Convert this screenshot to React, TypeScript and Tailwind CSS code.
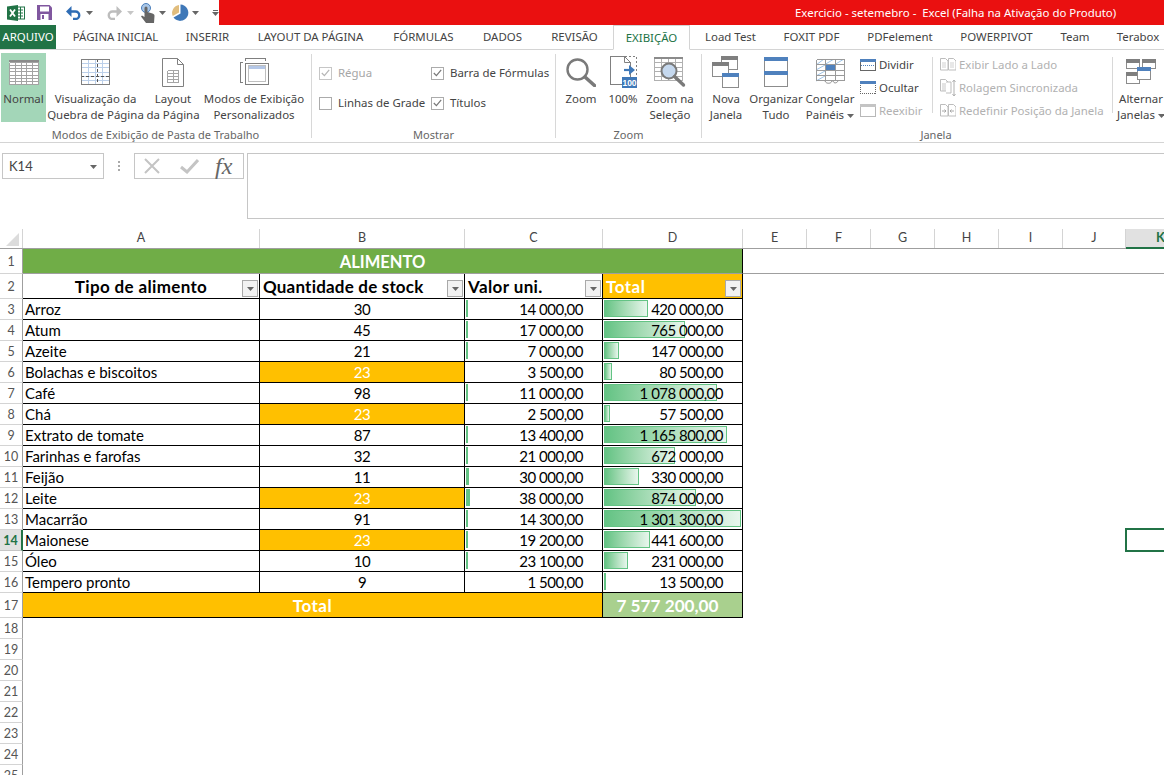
import type { ReactNode } from "react";

const tabs = [
  { name: "PÁGINA INICIAL", w: "w-[113px]" },
  { name: "INSERIR", w: "w-[71px]" },
  { name: "LAYOUT DA PÁGINA", w: "w-[135px]" },
  { name: "FÓRMULAS", w: "w-[91px]" },
  { name: "DADOS", w: "w-[67px]" },
  { name: "REVISÃO", w: "w-[77px]" },
  { name: "EXIBIÇÃO", w: "w-[77px]", active: true },
  { name: "Load Test", w: "w-[81px]" },
  { name: "FOXIT PDF", w: "w-[81px]" },
  { name: "PDFelement", w: "w-[96px]" },
  { name: "POWERPIVOT", w: "w-[97px]" },
  { name: "Team", w: "w-[60px]" },
  { name: "Terabox", w: "w-[66px]" },
];

const rows = [
  { name: "Arroz", qty: 30, unit: 14000, total: 420000 },
  { name: "Atum", qty: 45, unit: 17000, total: 765000 },
  { name: "Azeite", qty: 21, unit: 7000, total: 147000 },
  { name: "Bolachas e biscoitos", qty: 23, unit: 3500, total: 80500 },
  { name: "Café", qty: 98, unit: 11000, total: 1078000 },
  { name: "Chá", qty: 23, unit: 2500, total: 57500 },
  { name: "Extrato de tomate", qty: 87, unit: 13400, total: 1165800 },
  { name: "Farinhas e farofas", qty: 32, unit: 21000, total: 672000 },
  { name: "Feijão", qty: 11, unit: 30000, total: 330000 },
  { name: "Leite", qty: 23, unit: 38000, total: 874000 },
  { name: "Macarrão", qty: 91, unit: 14300, total: 1301300 },
  { name: "Maionese", qty: 23, unit: 19200, total: 441600 },
  { name: "Óleo", qty: 10, unit: 23100, total: 231000 },
  { name: "Tempero pronto", qty: 9, unit: 1500, total: 13500 },
];

const money = (n: number) => {
  const s = String(n).replace(/\B(?=(\d{3})+(?!\d))/g, " ");
  return `${s},00`;
};

const Caret = ({ color = "#666" }: { color?: string }) => (
  <svg width="7" height="4" viewBox="0 0 7 4" className="inline-block">
    <path d="M0 0h7L3.5 4z" fill={color} />
  </svg>
);

const Grid = ({ x, y, w, h, cols, rowsN, color }: { x: number; y: number; w: number; h: number; cols: number; rowsN: number; color: string }) => (
  <g stroke={color} shapeRendering="crispEdges" fill="none">
    {Array.from({ length: cols + 1 }).map((_, i) => (
      <line key={`c${i}`} x1={x + (w * i) / cols} x2={x + (w * i) / cols} y1={y} y2={y + h} />
    ))}
    {Array.from({ length: rowsN + 1 }).map((_, i) => (
      <line key={`r${i}`} y1={y + (h * i) / rowsN} y2={y + (h * i) / rowsN} x1={x} x2={x + w} />
    ))}
  </g>
);

const ExcelLogo = () => (
  <svg width="18" height="16" viewBox="0 0 18 16">
    <rect x="9" y="2" width="8.5" height="12" fill="#fff" stroke="#217346" />
    <path d="M11 5h5M11 8h5M11 11h5M13.5 2v12" stroke="#217346" />
    <path d="M0 1.5 11 0v16L0 14.5z" fill="#217346" />
    <path d="M3 4.5 8 11.5M8 4.5 3 11.5" stroke="#fff" strokeWidth="1.8" />
  </svg>
);

const SaveIcon = () => (
  <svg width="15" height="15" viewBox="0 0 15 15">
    <path d="M0 0h12.5L15 2.5V15H0z" fill="#80579f" />
    <rect x="3" y="1.5" width="9" height="5" fill="#fff" />
    <rect x="3.5" y="9" width="8" height="6" fill="#fff" />
    <rect x="5" y="10" width="2" height="4" fill="#80579f" />
  </svg>
);

const UndoIcon = ({ color, flip }: { color: string; flip?: boolean }) => (
  <svg width="15" height="14" viewBox="0 0 15 14" className={flip ? "-scale-x-100" : ""}>
    <path d="M3 5.5h6.5a3.7 3.7 0 0 1 0 7.5H7" fill="none" stroke={color} strokeWidth="2.4" />
    <path d="M5.5 0v11L0 5.5z" fill={color} />
  </svg>
);

const TouchIcon = () => (
  <svg width="14" height="20" viewBox="0 0 14 20">
    <circle cx="5" cy="5" r="4.5" fill="#a9c6e6" stroke="#4a7ebb" />
    <path d="M3.5 5a1.5 1.5 0 0 1 3 0v4l5 1.5c1.5.5 2 1 2 2.5L13 20H5L0 13.5l1-1 2.5 1.5z" fill="#666" />
  </svg>
);

const PieIcon = () => (
  <svg width="17" height="17" viewBox="0 0 17 17">
    <path d="M8.5 .5A8.2 8.2 0 1 1 1.5 13.5L8.5 9.5z" fill="#3f78b8" />
    <path d="M7 8.5V1A8 8 0 0 0 .7 12z" fill="#e1bd7d" />
  </svg>
);

const NormalIcon = () => (
  <svg width="30" height="25" viewBox="0 0 30 25">
    <rect x="0.5" y="0.5" width="29" height="24" fill="#fff" />
    <Grid x={0.5} y={2.5} w={29} h={22} cols={5} rowsN={7} color="#a3a3a3" />
    <rect x="0" y="0" width="30" height="2" fill="#8b8b8b" />
  </svg>
);

const BreakIcon = () => (
  <svg width="29" height="26" viewBox="0 0 29 26">
    <rect x="0.5" y="0.5" width="28" height="25" fill="#fff" stroke="#7f7f7f" />
    <Grid x={0.5} y={0.5} w={28} h={25} cols={4} rowsN={6} color="#bcd0ea" />
    <path d="M16.5 0v26M0 17.5h29" stroke="#555" strokeDasharray="3 2" shapeRendering="crispEdges" />
    <rect x="0.5" y="0.5" width="28" height="25" fill="none" stroke="#7f7f7f" shapeRendering="crispEdges" />
  </svg>
);

const LayoutIcon = () => (
  <svg width="22" height="29" viewBox="0 0 22 29">
    <path d="M.5.5h15l6 6v22H.5z" fill="#fff" stroke="#808080" />
    <path d="M15.5.5v6h6" fill="none" stroke="#808080" />
    <Grid x={5.5} y={12.5} w={11} h={12} cols={2} rowsN={4} color="#a5a5a5" />
  </svg>
);

const CustomIcon = () => (
  <svg width="29" height="28" viewBox="0 0 29 28" shapeRendering="crispEdges">
    <path d="M5 .5h20M5 0v3M25 0v3M.5 4v20M0 4h3M0 24h3" stroke="#7f7f7f" fill="none" />
    <rect x="5.5" y="5.5" width="23" height="21" fill="#fff" stroke="#7f7f7f" />
    <rect x="8.5" y="7.5" width="17" height="16" fill="#fff" stroke="#bfbfbf" />
    <rect x="9" y="8" width="16" height="3" fill="#b4c7e7" />
  </svg>
);

const ZoomIcon = () => (
  <svg width="30" height="29" viewBox="0 0 30 29">
    <circle cx="11.5" cy="11.5" r="10" fill="#fff" stroke="#7a7a7a" strokeWidth="2.4" />
    <path d="M19 19l9.5 8.5" stroke="#7a7a7a" strokeWidth="3.6" strokeLinecap="round" />
  </svg>
);

const HundredIcon = () => (
  <svg width="27" height="32" viewBox="0 0 27 32">
    <path d="M.5.5h14l6 6v22H.5z" fill="#fff" stroke="#808080" shapeRendering="crispEdges" />
    <path d="M15 .5h11.5v20" fill="none" stroke="#808080" strokeDasharray="2 2" shapeRendering="crispEdges" />
    <path d="M14.5.5v6h6" fill="none" stroke="#808080" />
    <path d="M14 14h8" stroke="#3f78b8" strokeWidth="2.2" />
    <path d="M19 9l6 5-6 5z" fill="#3f78b8" />
    <rect x="12" y="21" width="15" height="11" fill="#3f78b8" />
    <text x="19.5" y="30" textAnchor="middle" fontSize="8.5" fontWeight="700" fill="#fff" fontFamily="Liberation Sans, sans-serif">100</text>
  </svg>
);

const SelectionIcon = () => (
  <svg width="32" height="31" viewBox="0 0 32 31">
    <Grid x={0.5} y={1.5} w={28} h={22} cols={4} rowsN={5} color="#b0b0b0" />
    <rect x="0" y="0" width="29" height="2" fill="#8b8b8b" />
    <circle cx="15" cy="14" r="7.5" fill="#c5d8ee" stroke="#7a7a7a" strokeWidth="2" />
    <path d="M20.5 19.5l9 8.5" stroke="#7a7a7a" strokeWidth="3.4" strokeLinecap="round" />
  </svg>
);

const Win = ({ x, y, w, h, bar }: { x: number; y: number; w: number; h: number; bar: string }) => (
  <g shapeRendering="crispEdges">
    <rect x={x + 0.5} y={y + 0.5} width={w - 1} height={h - 1} fill="#fff" stroke="#8c8c8c" />
    <rect x={x} y={y} width={w} height="4" fill={bar} />
  </g>
);

const NewWindowIcon = () => (
  <svg width="28" height="32" viewBox="0 0 28 32">
    <Win x={9} y={0} w={17} h={14} bar="#7f7f7f" />
    <Win x={0} y={6} w={17} h={15} bar="#7f7f7f" />
    <Win x={10} y={17} w={17} h={15} bar="#4f81bd" />
  </svg>
);

const ArrangeIcon = () => (
  <svg width="24" height="30" viewBox="0 0 24 30" shapeRendering="crispEdges">
    <rect x="0.5" y="0.5" width="23" height="29" fill="#fff" stroke="#8c8c8c" />
    <rect x="0" y="0" width="24" height="4" fill="#4f81bd" />
    <rect x="0" y="14" width="24" height="4" fill="#4f81bd" />
  </svg>
);

const FreezeIcon = () => (
  <svg width="29" height="26" viewBox="0 0 29 26">
    <rect x="0.5" y="0.5" width="28" height="21" fill="#fff" />
    <path d="M0 6 8 0M8 6 18 0M18 6 28 0M0 11l9-5M0 17l9-5M0 22l9-5" stroke="#9dc3e6" />
    <Grid x={0.5} y={0.5} w={28} h={21} cols={3} rowsN={4} color="#9a9a9a" />
    <rect x="10" y="6" width="9" height="5" fill="#4f81bd" />
    <path d="M9 22c1 3 6 3 7 0M17 22c1 3 4 2 5 0" fill="none" stroke="#8c8c8c" />
  </svg>
);

const SplitIcon = () => (
  <svg width="16" height="12" viewBox="0 0 16 12" shapeRendering="crispEdges">
    <rect x="0.5" y="0.5" width="15" height="11" fill="#fff" stroke="#666" />
    <rect x="0" y="0" width="16" height="3" fill="#4f81bd" />
    <path d="M1 6.5h14" stroke="#4f81bd" strokeDasharray="1 1" />
  </svg>
);

const HideIcon = () => (
  <svg width="16" height="13" viewBox="0 0 16 13" shapeRendering="crispEdges">
    <rect x="0.5" y="0.5" width="15" height="12" fill="#fff" stroke="#666" strokeDasharray="1 1" />
    <rect x="0" y="0" width="16" height="3" fill="#4f81bd" />
  </svg>
);

const UnhideIcon = () => (
  <svg width="16" height="13" viewBox="0 0 16 13" shapeRendering="crispEdges">
    <rect x="0.5" y="0.5" width="15" height="12" fill="#fff" stroke="#b8b8b8" />
    <rect x="0" y="0" width="16" height="3" fill="#c4c4c4" />
  </svg>
);

const Page = ({ x }: { x: number }) => (
  <path d={`M${x + 0.5} .5h5l2.5 2.5v9h-7.5z`} fill="#fff" stroke="#bdbdbd" />
);

const SideBySideIcon = () => (
  <svg width="16" height="13" viewBox="0 0 16 13">
    <Page x={0} />
    <Page x={8} />
    <path d="M2 5h4M2 7h4M2 9h4M10 5h4M10 7h4M10 9h4" stroke="#d0d0d0" />
  </svg>
);

const SyncIcon = () => (
  <svg width="16" height="18" viewBox="0 0 16 18">
    <Page x={0} />
    <g transform="translate(0 2)">
      <path d="M2 3h5M2 5h5M2 7h5M2 9h5" stroke="#c8c8c8" />
    </g>
    <path d="M6 3h5v11H6" fill="#fff" stroke="#bdbdbd" />
    <path d="M14 1v16M12.5 3 14 1l1.5 2M12.5 15l1.5 2 1.5-2" fill="none" stroke="#b0b0b0" />
  </svg>
);

const ResetIcon = () => (
  <svg width="16" height="13" viewBox="0 0 16 13">
    <Page x={0} />
    <Page x={8} />
    <path d="M2 7h4M4.5 5.5 6 7 4.5 8.5M14 7h-4M11.5 5.5 10 7l1.5 1.5" fill="none" stroke="#a8a8a8" />
  </svg>
);

const SwitchIcon = () => (
  <svg width="30" height="26" viewBox="0 0 30 26">
    <Win x={0} y={0} w={14} h={10} bar="#7f7f7f" />
    <Win x={16} y={0} w={14} h={10} bar="#7f7f7f" />
    <Win x={0} y={13} w={14} h={12} bar="#7f7f7f" />
    <Win x={11} y={8} w={14} h={13} bar="#4f81bd" />
  </svg>
);

const BigButton = ({ w, icon, lines, active, caret }: { w: string; icon: ReactNode; lines: string[]; active?: boolean; caret?: boolean }) => (
  <div className={`${w} h-[69px] flex flex-col items-center shrink-0 ${active ? "bg-[#a3d6b8]" : ""}`}>
    <div className="h-[38px] shrink-0 flex items-center justify-center">{icon}</div>
    <div className="text-center leading-[16px] whitespace-nowrap">
      {lines.map((l, i) => (
        <div key={l}>
          {l}
          {caret && i === lines.length - 1 && (
            <span className="ml-[3px] align-middle inline-flex">
              <Caret />
            </span>
          )}
        </div>
      ))}
    </div>
  </div>
);

const SmallRow = ({ icon, label, disabled }: { icon: ReactNode; label: string; disabled?: boolean }) => (
  <div className={`h-[23px] flex items-center whitespace-nowrap ${disabled ? "text-[#b1b1b1]" : ""}`}>
    <div className="w-[19px] shrink-0 flex">{icon}</div>
    {label}
  </div>
);

const CheckRow = ({ label, checked, disabled }: { label: string; checked?: boolean; disabled?: boolean }) => (
  <div className={`h-[20px] flex items-center gap-[6px] whitespace-nowrap ${disabled ? "text-[#a6a6a6]" : ""}`}>
    <div className={`w-[13px] h-[13px] border bg-white flex items-center justify-center ${disabled ? "border-[#c6c6c6]" : "border-[#ababab]"}`}>
      {checked && (
        <svg width="9" height="8" viewBox="0 0 9 8">
          <path d="M.8 4l2.6 2.6L8.2.8" fill="none" stroke={disabled ? "#b5b5b5" : "#777"} strokeWidth="1.2" />
        </svg>
      )}
    </div>
    {label}
  </div>
);

const Sep = () => <div className="w-px h-[84px] mt-[4px] bg-[#d8d8d8] shrink-0" />;

const Group = ({ w, label, children }: { w: string; label: string; children: ReactNode }) => (
  <div className={`${w} h-full flex flex-col shrink-0`}>
    <div className="flex-1 flex pt-[3px]">{children}</div>
    <div className="h-[17px] leading-[19px] text-center text-[11px] text-[#666] whitespace-nowrap">{label}</div>
  </div>
);

const FilterBtn = () => (
  <div className="absolute right-[1px] bottom-[1px] w-[16px] h-[17px] bg-[#f2f2f2] border border-[#a9a9a9] flex items-center justify-center">
    <Caret color="#666" />
  </div>
);

const RowHead = ({ n, h, selected }: { n: number; h: string; selected?: boolean }) => (
  <div
    className={`w-[23px] ${h} shrink-0 flex items-center justify-center pt-[2px] text-[12.5px] border-b ${
      selected
        ? "bg-[#e1e1e1] text-[#217346] font-bold border-b-[#c6c6c6] border-r-2 border-r-[#217346]"
        : "text-[#555] border-b-[#d4d4d4] border-r border-r-[#9f9f9f]"
    }`}
  >
    {n}
  </div>
);

const DataBar = ({ pct, solid }: { pct: number; solid?: boolean }) => (
  <div
    className={`absolute left-[1px] top-[1px] bottom-[2px] border border-[#63c384] ${solid ? "bg-[#63c384]" : "bg-gradient-to-r from-[#63c384] to-[#e8f6ed]"}`}
    style={{ width: pct }}
  />
);

export default function App() {
  const maxTotal = 1301300;
  return (
    <div className="w-[1164px] h-[775px] overflow-hidden bg-white text-[11.45px] text-[#444] font-['Noto_Sans',sans-serif]">
      {/* title bar */}
      <div className="h-[25px] flex">
        <div className="w-[219px] shrink-0 flex items-center">
          <div className="ml-[7px] flex"><ExcelLogo /></div>
          <div className="ml-[12px] flex"><SaveIcon /></div>
          <div className="ml-[14px] flex"><UndoIcon color="#2f6db5" /></div>
          <div className="ml-[5px] flex"><Caret /></div>
          <div className="ml-[14px] flex"><UndoIcon color="#bdbdbd" flip /></div>
          <div className="ml-[5px] flex"><Caret color="#c6c6c6" /></div>
          <div className="ml-[7px] flex"><TouchIcon /></div>
          <div className="ml-[4px] flex"><Caret /></div>
          <div className="ml-[6px] flex"><PieIcon /></div>
          <div className="ml-[3px] flex"><Caret /></div>
          <div className="ml-[13px] flex flex-col gap-[1px] items-center">
            <div className="w-[5px] h-px bg-[#666]" />
            <Caret />
          </div>
        </div>
        <div className="flex-1 bg-[#ea1010] text-white flex items-center pl-[576px] whitespace-pre">
          Exercicio - setemebro -  Excel (Falha na Ativação do Produto)
        </div>
      </div>

      {/* tabs */}
      <div className="h-[25px] flex border-b border-[#d4d4d4] whitespace-nowrap">
        <div className="w-[56px] shrink-0 bg-[#217346] text-white flex items-center justify-center">ARQUIVO</div>
        <div className="w-[3px] shrink-0" />
        {tabs.map((t) => (
          <div
            key={t.name}
            className={`${t.w} shrink-0 flex items-center justify-center ${
              t.active ? "bg-white text-[#217346] border border-[#d4d4d4] border-b-white h-[25px]" : ""
            }`}
          >
            {t.name}
          </div>
        ))}
      </div>

      {/* ribbon */}
      <div className="h-[93px] flex border-b border-[#d4d4d4] overflow-hidden">
        <Group w="w-[311px]" label="Modos de Exibição de Pasta de Trabalho">
          <div className="w-px shrink-0" />
          <BigButton w="w-[45px]" icon={<NormalIcon />} lines={["Normal"]} active />
          <BigButton w="w-[99px]" icon={<BreakIcon />} lines={["Visualização da", "Quebra de Página"]} />
          <BigButton w="w-[56px]" icon={<LayoutIcon />} lines={["Layout", "da Página"]} />
          <BigButton w="w-[106px]" icon={<CustomIcon />} lines={["Modos de Exibição", "Personalizados"]} />
        </Group>
        <Sep />
        <Group w="w-[243px]" label="Mostrar">
          <div className="pl-[7px] w-[119px] pt-[10px] flex flex-col gap-[10px]">
            <CheckRow label="Régua" checked disabled />
            <CheckRow label="Linhas de Grade" />
          </div>
          <div className="pt-[10px] flex flex-col gap-[10px]">
            <CheckRow label="Barra de Fórmulas" checked />
            <CheckRow label="Títulos" checked />
          </div>
        </Group>
        <Sep />
        <Group w="w-[145px]" label="Zoom">
          <BigButton w="w-[50px]" icon={<ZoomIcon />} lines={["Zoom"]} />
          <BigButton w="w-[34px]" icon={<HundredIcon />} lines={["100%"]} />
          <BigButton w="w-[60px]" icon={<SelectionIcon />} lines={["Zoom na", "Seleção"]} />
        </Group>
        <Sep />
        <Group w="w-[468px]" label="Janela">
          <BigButton w="w-[48px]" icon={<NewWindowIcon />} lines={["Nova", "Janela"]} />
          <BigButton w="w-[52px]" icon={<ArrangeIcon />} lines={["Organizar", "Tudo"]} />
          <BigButton w="w-[56px]" icon={<FreezeIcon />} lines={["Congelar", "Painéis"]} caret />
          <div className="w-[72px] ml-[2px] shrink-0">
            <SmallRow icon={<SplitIcon />} label="Dividir" />
            <SmallRow icon={<HideIcon />} label="Ocultar" />
            <SmallRow icon={<UnhideIcon />} label="Reexibir" disabled />
          </div>
          <div className="w-px h-[56px] mt-[4px] bg-[#d8d8d8] shrink-0" />
          <div className="w-[172px] ml-[7px] shrink-0">
            <SmallRow icon={<SideBySideIcon />} label="Exibir Lado a Lado" disabled />
            <SmallRow icon={<SyncIcon />} label="Rolagem Sincronizada" disabled />
            <SmallRow icon={<ResetIcon />} label="Redefinir Posição da Janela" disabled />
          </div>
          <div className="w-px h-[56px] mt-[4px] bg-[#d8d8d8] shrink-0" />
          <BigButton w="w-[56px]" icon={<SwitchIcon />} lines={["Alternar", "Janelas"]} caret />
        </Group>
      </div>

      {/* formula bar */}
      <div className="h-[86px] flex items-start pt-[10px]">
        <div className="ml-[2px] w-[102px] h-[26px] border border-[#c6c6c6] flex items-center justify-between pt-px pl-[6px] pr-[6px] font-['Lato',sans-serif] text-[13px]">
          K14
          <Caret />
        </div>
        <div className="w-[30px] h-[26px] flex flex-col items-center justify-center gap-[2px]">
          <div className="w-[2px] h-[2px] bg-[#aaa]" />
          <div className="w-[2px] h-[2px] bg-[#aaa]" />
          <div className="w-[2px] h-[2px] bg-[#aaa]" />
        </div>
        <div className="w-[110px] h-[26px] border border-[#c6c6c6] flex items-center">
          <svg width="18" height="16" viewBox="0 0 18 16" className="ml-[8px]">
            <path d="M2 1l14 14M16 1 2 15" stroke="#c4c4c4" strokeWidth="2" />
          </svg>
          <svg width="19" height="15" viewBox="0 0 19 15" className="ml-[19px]">
            <path d="M1 8l6 5L18 1" fill="none" stroke="#c4c4c4" strokeWidth="3" />
          </svg>
          <span className="ml-[16px] font-['Liberation_Serif',serif] italic text-[24px] leading-none text-[#666]">fx</span>
        </div>
        <div className="ml-[3px] flex-1 h-[66px] border border-[#c6c6c6] border-r-0" />
      </div>

      {/* sheet */}
      <div className="font-['Lato',sans-serif] text-black">
        {/* column headers */}
        <div className="h-[20px] flex border-b border-[#9f9f9f] text-[12.5px] text-[#444]">
          <div className="w-[23px] shrink-0 border-r border-[#d4d4d4] flex items-end justify-end pr-[3px] pb-[2px]">
            <svg width="13" height="13" viewBox="0 0 13 13"><path d="M13 0v13H0z" fill="#dcdcdc" /></svg>
          </div>
          {[
            ["A", "w-[237px]"],
            ["B", "w-[205px]"],
            ["C", "w-[138px]"],
            ["D", "w-[140px]"],
            ["E", "w-[64px]"],
            ["F", "w-[64px]"],
            ["G", "w-[64px]"],
            ["H", "w-[64px]"],
            ["I", "w-[64px]"],
            ["J", "w-[63px]"],
          ].map(([c, w]) => (
            <div key={c} className={`${w} shrink-0 border-r border-[#d4d4d4] flex items-center justify-center`}>{c}</div>
          ))}
          <div className="flex-1 bg-[#e1e1e1] border-b-2 border-[#217346] -mb-px pl-[30px] flex items-center font-bold text-[#217346] text-[13px]">K</div>
        </div>

        {/* row 1 */}
        <div className="flex h-[25px]">
          <RowHead n={1} h="h-[25px]" />
          <div className="w-[720px] shrink-0 bg-[#70ad47] border-r border-black border-b border-b-[#9f9f9f] flex items-center justify-center pt-[3px] text-white font-bold text-[16.5px]">ALIMENTO</div>
          <div className="flex-1 border-b border-[#9f9f9f]" />
        </div>

        {/* row 2 */}
        <div className="flex h-[25px]">
          <RowHead n={2} h="h-[25px]" />
          <div className="relative w-[237px] shrink-0 border-r border-b border-black flex items-center justify-center pt-px font-bold text-[17px] tracking-[0.35px]">
            Tipo de alimento
            <FilterBtn />
          </div>
          <div className="relative w-[205px] shrink-0 border-r border-b border-black flex items-center pt-px pl-[3px] font-bold text-[17px] tracking-[0.2px]">
            Quantidade de stock
            <FilterBtn />
          </div>
          <div className="relative w-[138px] shrink-0 border-r border-b border-black flex items-center pt-px pl-[3px] font-bold text-[17px] tracking-[0.4px]">
            Valor uni.
            <FilterBtn />
          </div>
          <div className="relative w-[140px] shrink-0 bg-[#ffc000] border-r border-b border-black flex items-center pt-px pl-[3px] text-white font-bold text-[17px] tracking-[0.5px]">
            Total
            <FilterBtn />
          </div>
        </div>

        {/* rows 3 to 16 */}
        {rows.map((r, i) => {
          const n = i + 3;
          const orange = r.qty === 23;
          return (
            <div key={r.name} className="flex h-[21px] text-[15px]">
              <RowHead n={n} h="h-[21px]" selected={n === 14} />
              <div className="w-[237px] shrink-0 border-r border-b border-black flex items-center pt-px pl-[2px]">{r.name}</div>
              <div className={`w-[205px] shrink-0 border-r border-b border-black flex items-center justify-center pt-px tracking-[-0.5px] ${orange ? "bg-[#ffc000] text-white" : ""}`}>{r.qty}</div>
              <div className="relative w-[138px] shrink-0 border-r border-b border-black flex items-center justify-end pt-px pr-[19px] tracking-[-0.5px]">
                {r.unit >= 5000 && <DataBar pct={Math.max(1, Math.round((r.unit / 38000) * 4))} solid />}
                <span className="relative">{money(r.unit)}</span>
              </div>
              <div className="relative w-[140px] shrink-0 border-r border-b border-black flex items-center justify-end pt-px pr-[19px] tracking-[-0.5px]">
                <DataBar pct={Math.max(1, Math.round((r.total / maxTotal) * 137))} />
                <span className="relative">{money(r.total)}</span>
              </div>
              {n === 14 && (
                <div className="relative flex-1">
                  <div className="absolute left-[382px] -top-[2px] w-[60px] h-[24px] border-2 border-[#217346]" />
                </div>
              )}
            </div>
          );
        })}

        {/* row 17 */}
        <div className="flex h-[25px]">
          <RowHead n={17} h="h-[25px]" />
          <div className="w-[580px] shrink-0 bg-[#ffc000] border-r border-b border-black flex items-center justify-center pt-px text-white font-bold text-[17px] tracking-[0.5px]">Total</div>
          <div className="w-[140px] shrink-0 bg-[#a9d08e] border-r border-b border-black flex items-center justify-center pt-px pr-[10px] text-white font-bold text-[17.2px]">7 577 200,00</div>
        </div>

        {/* empty rows */}
        {[18, 19, 20, 21, 22, 23, 24, 25].map((n) => (
          <div key={n} className="flex h-[21px]">
            <RowHead n={n} h="h-[21px]" />
          </div>
        ))}
      </div>
    </div>
  );
}
